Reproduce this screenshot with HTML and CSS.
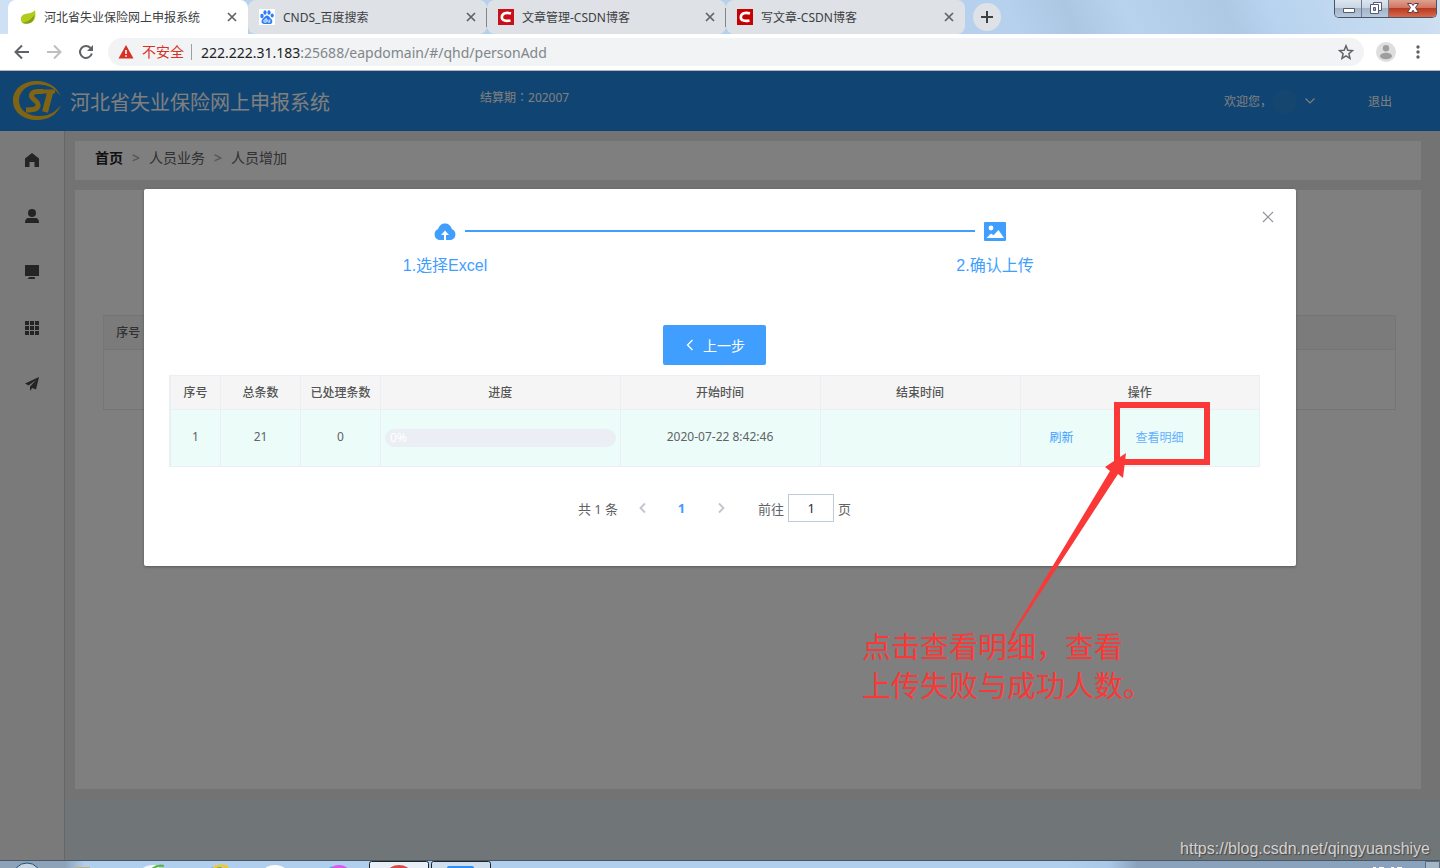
FILE: index.html
```html
<!DOCTYPE html>
<html lang="zh-CN">
<head>
<meta charset="utf-8">
<meta name="viewport" content="width=device-width, initial-scale=1">
<title>河北省失业保险网上申报系统</title>
<link rel="stylesheet" href="styles.css">
</head>
<body>
<div class="browser">
  <div class="tabstrip">
    <div class="tab tab-active">
      <svg class="favicon" viewBox="0 0 16 16"><path d="M15 1c1 6 .5 11-5 13-3 1-6 .5-8-.2C-.5 10 1 6 5 5c4-.8 7-.5 10-4z" fill="#b5cb1c"/><path d="M2 13.800c5-.3 9-3 12.500-8C14 11 12 14 8 14.600c-2.500.3-4.500 0-6-.8z" fill="#7fa016"/></svg>
      <span class="tab-title">河北省失业保险网上申报系统</span>
      <button class="tab-close" aria-label="关闭标签页"><svg viewBox="0 0 16 16"><path d="M4 4l8 8M12 4l-8 8"/></svg></button>
    </div>
    <div class="tab">
      <svg class="favicon" viewBox="0 0 16 16"><path fill="#fff" d="M0 0h16v16H0z"/><g fill="#2c7df7"><ellipse cx="3" cy="7" rx="1.700" ry="2.200"/><ellipse cx="6" cy="3.500" rx="1.600" ry="2.200"/><ellipse cx="10" cy="3.500" rx="1.600" ry="2.200"/><ellipse cx="13.200" cy="6.500" rx="1.600" ry="2"/><path d="M8 6.500c1.800 0 2.400 1.700 3.800 2.900 2.400 2 2 5.600-1 5.600H5.200c-3 0-3.600-3.400-1.200-5.400C5.400 8.500 6 6.500 8 6.500z"/></g><path d="M7.200 9v4.200H5.800c-1.400 0-1.400-2.400 0-2.400h1.400M8.800 10.500v2c0 .7.500.7 2 .7v-2.700" stroke="#fff" fill="none" stroke-width=".9"/></svg>
      <span class="tab-title">CNDS_百度搜索</span>
      <button class="tab-close" aria-label="关闭标签页"><svg viewBox="0 0 16 16"><path d="M4 4l8 8M12 4l-8 8"/></svg></button>
    </div>
    <div class="tab tab-divided">
      <svg class="favicon" viewBox="0 0 16 16"><path fill="#c9101a" d="M0 0h16v16H0z"/><path d="M13 4.500C8.500 3.200 4 4 3.800 8.200c-.1 3.700 4.500 4.200 8.700 3.200" fill="none" stroke="#fff" stroke-width="2.600"/></svg>
      <span class="tab-title">文章管理-CSDN博客</span>
      <button class="tab-close" aria-label="关闭标签页"><svg viewBox="0 0 16 16"><path d="M4 4l8 8M12 4l-8 8"/></svg></button>
    </div>
    <div class="tab tab-divided">
      <svg class="favicon" viewBox="0 0 16 16"><path fill="#c80000" d="M0 0h16v16H0z"/><path d="M13 4.500C8.500 3.200 4 4 3.800 8.200c-.1 3.700 4.500 4.200 8.700 3.200" fill="none" stroke="#fff" stroke-width="2.600"/></svg>
      <span class="tab-title">写文章-CSDN博客</span>
      <button class="tab-close" aria-label="关闭标签页"><svg viewBox="0 0 16 16"><path d="M4 4l8 8M12 4l-8 8"/></svg></button>
    </div>
    <button class="new-tab" aria-label="新标签页"><svg viewBox="0 0 28 28"><path d="M14 8v12M8 14h12" stroke="#3c4043" stroke-width="2"/></svg></button>
    <div class="window-controls">
      <button class="win-btn" aria-label="最小化"><svg viewBox="0 0 28 18"><path d="M8.500 8.500h11v4h-11z" fill="#fff" stroke="#555b73"/></svg></button>
      <button class="win-btn" aria-label="还原"><svg viewBox="0 0 28 18"><path d="M11.500 2.500h8v8h-8z" fill="#fff" stroke="#555b73"/><path d="M8.500 4.500h8v9h-8z" fill="#fff" stroke="#555b73"/><path d="M11.500 7.500h2v3h-2z" fill="#9fb0cc" stroke="#555b73"/></svg></button>
      <button class="win-btn win-close" aria-label="关闭"><svg viewBox="0 0 46 18"><path d="M18.500 3.500h4l1.500 2 1.500-2h4l-3 4 3 5h-4l-1.500-2.300-1.500 2.300h-4l3-5z" fill="#fff" stroke="#5b3b48"/></svg></button>
    </div>
  </div>

  <div class="toolbar">
    <button class="nav-btn" aria-label="后退"><svg viewBox="0 0 16 16"><path d="M15 8H2M8 1.500L1.500 8 8 14.500" fill="none" stroke="#5f6368" stroke-width="2"/></svg></button>
    <button class="nav-btn" aria-label="前进"><svg viewBox="0 0 16 16"><path d="M1 8h13M8 1.500L14.500 8 8 14.500" fill="none" stroke="#bdbfc1" stroke-width="2"/></svg></button>
    <button class="nav-btn" aria-label="重新加载"><svg viewBox="0 0 16 16"><path d="M13.800 9.500A6 6 0 1 1 12.500 4" fill="none" stroke="#5f6368" stroke-width="2"/><path d="M15 1v6H9z" fill="#5f6368"/></svg></button>
    <div class="address">
      <svg class="warn" viewBox="0 0 16 16"><path d="M8 1l7.500 13.500H.5z" fill="#d93025"/><path d="M7.200 6h1.600v4H7.200zM7.200 11.200h1.600v1.600H7.200z" fill="#fff"/></svg>
      <span class="insecure">不安全</span>
      <span class="url"><span class="host">222.222.31.183</span>:25688/eapdomain/#/qhd/personAdd</span>
      <button class="star" aria-label="收藏"><svg viewBox="0 0 16 16"><path d="M8 1.800l1.800 4.400 4.700.4-3.600 3.100 1.100 4.600L8 11.800l-4 2.500 1.100-4.600-3.600-3.100 4.700-.4z" fill="none" stroke="#5f6368" stroke-width="1.500"/></svg></button>
    </div>
    <button class="profile" aria-label="用户"><svg viewBox="0 0 20 20"><circle cx="10" cy="10" r="10" fill="#dedede"/><circle cx="10" cy="6.300" r="3.200" fill="#9e9e9e"/><ellipse cx="10" cy="14" rx="6" ry="3.200" fill="#9e9e9e"/></svg></button>
    <button class="more" aria-label="菜单"><svg viewBox="0 0 16 16"><g fill="#5f6368"><circle cx="8" cy="3" r="1.700"/><circle cx="8" cy="8" r="1.700"/><circle cx="8" cy="13" r="1.700"/></g></svg></button>
  </div>

  <div class="viewport">
    <div class="app">
      <header class="app-header">
        <div class="brand">
          <svg class="logo" viewBox="0 0 50 40"><path fill="#ffc828" fill-rule="evenodd" d="M49 16C45 5 35 0 25 0 11 0 1 8 1 19.500S11 39 25 39c11 0 20-5 24-15-5 6-10 11-22 11C14 35 7 28 7 19.500S14 3.500 26 3.500c10 0 18 4 23 12.500z"/><g fill="none" stroke="#ffc828"><path d="M31 10.500h-5c-6 0-8 3.500-5.500 6.500 2.500 3 6.500 4 5.500 8-1 3.500-5 4-12 4" stroke-width="5"/><path d="M30 10.500h13" stroke-width="4"/><path d="M38.500 10L33 31" stroke-width="6"/></g></svg>
          <h1 class="brand-name">河北省失业保险网上申报系统</h1>
        </div>
        <div class="period">结算期<span class="mid" lang="zh-TW">：</span>202007</div>
        <div class="account">
          <button class="welcome">欢迎您，<span class="avatar"></span><svg class="chevron" viewBox="0 0 12 12"><path d="M1.500 3.500L6 8l4.500-4.500" fill="none" stroke="#fff" stroke-width="1.200"/></svg></button>
          <a class="logout" href="#">退出</a>
        </div>
      </header>
      <nav class="sidebar">
        <a href="#" aria-label="首页"><svg viewBox="0 0 14 14"><path d="M7 0l7 5.500V14H9.500V9h-5v5H0V5.500z"/></svg></a>
        <a href="#" aria-label="人员业务"><svg viewBox="0 0 14 14"><circle cx="7" cy="4" r="4"/><path d="M0 14c0-3 1-5 4-5h6c3 0 4 2 4 5z"/></svg></a>
        <a href="#" aria-label="单位业务"><svg viewBox="0 0 14 14"><path d="M0 0h14v11H0zM4.500 12h5l.8 2H2.500z"/></svg></a>
        <a href="#" aria-label="应用"><svg viewBox="0 0 14 14"><path d="M0 0h4v4H0zM5 0h4v4H5zM10 0h4v4h-4zM0 5h4v4H0zM5 5h4v4H5zM10 5h4v4h-4zM0 10h4v4H0zM5 10h4v4H5zM10 10h4v4h-4z"/></svg></a>
        <a href="#" aria-label="申报"><svg viewBox="0 0 14 14"><path d="M14 0L0 6.500l3.500 2L11 3 5 9.500V14l2.200-3 3.800 1.500z"/></svg></a>
      </nav>
      <main class="main">
        <div class="pane">
          <nav class="crumbs"><a class="crumb-home" href="#">首页</a><span class="crumb-sep">&gt;</span><a href="#">人员业务</a><span class="crumb-sep">&gt;</span><a href="#">人员增加</a></nav>
          <section class="panel">
            <table class="list">
              <thead><tr><th class="list-index">序号</th><th></th></tr></thead>
              <tbody><tr><td colspan="2"></td></tr></tbody>
            </table>
          </section>
        </div>
      </main>
    </div>

    <div class="mask">
      <section class="dialog" role="dialog" aria-label="上传">
        <button class="dialog-close" aria-label="关闭对话框"><svg viewBox="0 0 12 12"><path d="M1 1l10 10M11 1L1 11" stroke="#909399" stroke-width="1.200"/></svg></button>
        <div class="steps">
          <div class="step">
            <div class="step-head"><i class="line line-off"></i><svg class="step-icon" viewBox="0 0 24 24"><path d="M6 21a5.800 5.800 0 0 1-.8-11C6 6.500 9 4.500 12 4.500s6 2 6.800 5.500a5.800 5.800 0 0 1-.8 11h-5v-5h3l-4-4.500L8 16h3v5z" fill="#409eff"/></svg><i class="line"></i></div>
            <div class="step-title">1.选择Excel</div>
          </div>
          <div class="step">
            <div class="step-head"><i class="line"></i><svg class="step-icon" viewBox="0 0 24 24"><rect x="1" y="3" width="22" height="19" rx="1" fill="#409eff"/><circle cx="8" cy="9" r="2.400" fill="#fff"/><path d="M3.500 19l4.500-4.500 2.500 1.800L15.500 11l5.500 8z" fill="#fff"/></svg><i class="line line-off"></i></div>
            <div class="step-title">2.确认上传</div>
          </div>
        </div>
        <div class="dialog-body">
          <button class="prev-step"><svg viewBox="0 0 12 12"><path d="M8.500 1L3.500 6l5 5" fill="none" stroke="#fff" stroke-width="1.300"/></svg>上一步</button>
          <table class="records">
            <colgroup><col class="c-index"><col class="c-count"><col class="c-count"><col class="c-wide"><col class="c-time"><col class="c-time"><col class="c-wide"></colgroup>
            <thead><tr><th>序号</th><th>总条数</th><th>已处理条数</th><th>进度</th><th>开始时间</th><th>结束时间</th><th>操作</th></tr></thead>
            <tbody><tr>
              <td>1</td><td>21</td><td>0</td>
              <td class="progress-cell"><div class="progress" role="progressbar" aria-label="进度" aria-valuenow="0" aria-valuemin="0" aria-valuemax="100">0%</div></td>
              <td>2020-07-22 8:42:46</td><td></td>
              <td><div class="actions"><a href="#">刷新</a><a class="detail" href="#">查看明细</a></div></td>
            </tr></tbody>
          </table>
          <div class="pagination">
            <span class="total">共 1 条</span>
            <button class="page-btn" aria-label="上一页"><svg viewBox="0 0 12 12"><path d="M8 1.500L3.500 6 8 10.500" fill="none" stroke="#c0c4cc" stroke-width="1.800"/></svg></button>
            <button class="page-btn page-current">1</button>
            <button class="page-btn" aria-label="下一页"><svg viewBox="0 0 12 12"><path d="M4 1.500L8.500 6 4 10.500" fill="none" stroke="#c0c4cc" stroke-width="1.800"/></svg></button>
            <label class="jump">前往<input type="text" value="1" inputmode="numeric">页</label>
          </div>
        </div>
      </section>
    </div>
  </div>

  <footer class="taskbar">
    <svg class="task-left" viewBox="0 0 500 8"><circle cx="27" cy="16" r="14" fill="#c4d4e2" stroke="#1b4f7c"/><path d="M75 6h15v1H75z" fill="#c8b070"/><path d="M142 8c3-4 12-5 18-3l-2 3z" fill="#f4f8fa"/><path d="M152 8c4-3 8-4 12-3" stroke="#5cb83a" stroke-width="2" fill="none"/><path d="M207 8l7-2h8l-2 2z" fill="#5a9ac0"/><path d="M213 8c4-4 10-4 14-2v2" stroke="#f3cb18" stroke-width="2.500" fill="none"/><ellipse cx="275" cy="10" rx="11" ry="6" fill="#fff"/><path d="M327 8l5-3v3z" fill="#35c4ef"/><ellipse cx="339" cy="11" rx="10" ry="7" fill="#df55f2"/><rect x="369.500" y=".5" width="59" height="12" rx="2" fill="#e8eff6" stroke="#222"/><ellipse cx="399" cy="11" rx="11" ry="7" fill="#d94a40"/><rect x="431.500" y=".5" width="59" height="12" rx="2" fill="#cfdeed" stroke="#222"/><rect x="447" y="5" width="27" height="8" rx="2" fill="#2a90f5"/></svg>
    <svg class="task-right" viewBox="0 0 80 8"><path d="M13 6.500h3M19 6.500h5M31 6.500h3M37 6.500h5" stroke="#fff"/><path d="M65.500 .5h14v10h-14z" fill="#a5b6c6" stroke="#5b6b7b"/></svg>
  </footer>

  <div class="note" aria-hidden="true">
    <div class="note-box"></div>
    <svg class="note-arrow" viewBox="0 0 118 184"><path d="M116 0l-3 25-5-4L3 182l-3 2L100 18l-5-4z" fill="#fb3838"/></svg>
  </div>
  <p class="note-text">点击查看明细，查看<br>上传失败与成功人数。</p>
  <div class="watermark">https://blog.csdn.net/qingyuanshiye</div>
</div>
</body>
</html>
```

FILE: styles.css
```css
* { box-sizing: border-box; }
body {
  margin: 0;
  font-family: "Noto Sans", "Noto Sans CJK SC", sans-serif;
  font-size: 12px;
  color: #606266;
}
button {
  padding: 0;
  border: 0;
  background: none;
  font: inherit;
  color: inherit;
}
a { color: inherit; text-decoration: none; }
svg { display: block; flex: none; }
.browser {
  position: relative;
  display: flex;
  flex-direction: column;
  min-height: 100vh;
  overflow: hidden;
}

/* tab strip */
.tabstrip {
  display: flex;
  height: 34px;
  padding-left: 8px;
  background: linear-gradient(65deg, #cfe1f4 0, #b3d0ec 20%, #b5d1ed 70%, #abc7e2 74%, #b7d3ee 78%, #adc9e4 85%, #b7d3ef 88%, #cfe0f1 100%);
}
.tab {
  position: relative;
  display: flex;
  align-items: center;
  flex: 0 1 239px;
  min-width: 0;
  gap: 8px;
  padding: 0 8px 0 11px;
  border-radius: 8px;
  background: #dee1e6;
  color: #3c4043;
}
.tab-active {
  flex-basis: 240px;
  padding-left: 12px;
  border-radius: 8px 8px 0 0;
  background: #fff;
}
.tab-divided::before {
  content: "";
  position: absolute;
  left: -1px;
  top: 8px;
  width: 1px;
  height: 19px;
  background: #80868b;
}
.favicon { width: 16px; height: 16px; }
.tab-title { flex: 1; overflow: hidden; white-space: nowrap; }
.tab-close, .tab-close svg { width: 16px; height: 16px; }
.tab-close path { stroke: #5f6368; stroke-width: 1.700; }
.new-tab {
  width: 28px;
  height: 28px;
  margin: 3px 0 0 8px;
  border-radius: 50%;
  background: #dee1e6;
}
.window-controls {
  display: flex;
  height: 18px;
  margin: 0 3px 0 auto;
  border: 1px solid #475468;
  border-top: 0;
  border-radius: 0 0 5px 5px;
  overflow: hidden;
}
.win-btn {
  width: 27px;
  border-right: 1px solid #6c7a90;
  background: linear-gradient(#dde6ef 0, #c9d5e2 45%, #a3b3c9 50%, #b9c9db 100%);
}
.win-btn svg { height: 18px; }
.win-close { width: 47px; border: 0; background: linear-gradient(#dfa18f 0, #cf7663 45%, #b93a22 50%, #d8694b 100%); }

/* toolbar */
.toolbar {
  display: flex;
  align-items: center;
  height: 37px;
  padding: 0 14px;
  border-bottom: 1px solid #b6b4b6;
  background: #fff;
}
.nav-btn { width: 16px; margin-right: 16px; }
.nav-btn svg, .star svg, .more svg { width: 16px; height: 16px; }
.address {
  display: flex;
  align-items: center;
  flex: 1;
  height: 28px;
  margin: 0 12px 0 -2px;
  padding: 0 10px;
  border-radius: 14px;
  background: #f1f3f4;
  font-size: 14px;
}
.warn { width: 16px; height: 16px; margin-right: 8px; }
.insecure {
  padding-right: 7px;
  border-right: 1px solid #9aa0a6;
  line-height: 16px;
  color: #d93025;
}
.url { flex: 1; padding-left: 9px; color: #80868b; white-space: nowrap; }
.host { color: #202124; }
.profile svg { width: 20px; height: 20px; }
.more { margin-left: 14px; }

/* application */
.viewport { position: relative; display: flex; flex: 1; }
.app {
  display: grid;
  grid-template: 60px 1fr / 65px 1fr;
  flex: 1;
  background: #e1eaf0;
}
.app-header {
  grid-column: 1 / -1;
  display: grid;
  grid-template-columns: 1fr 1fr 1fr;
  background: #2088e4;
  color: #fff;
}
.brand { display: flex; align-items: center; gap: 8px; padding-left: 12px; }
.logo { width: 50px; height: 40px; }
.brand-name { margin: 0; font-size: 20px; font-weight: 400; white-space: nowrap; }
.period { padding-top: 16px; line-height: 20px; }
.mid { font-family: "Noto Sans CJK TC", sans-serif; }
.account {
  display: flex;
  align-items: center;
  justify-content: flex-end;
  gap: 52px;
  padding-right: 48px;
}
.welcome { display: flex; align-items: center; }
.avatar { width: 25px; height: 25px; border-radius: 50%; background: #2b8cdf; }
.chevron { width: 12px; height: 12px; margin-left: 7px; }
.sidebar { padding-top: 1px; border-right: 1px solid #ccc; background: #f4f4f4; }
.sidebar a { display: grid; place-items: center; height: 56px; }
.sidebar svg { width: 14px; height: 14px; fill: #484848; }
.main { display: flex; padding-bottom: 61px; }
.pane {
  display: flex;
  flex: 1;
  flex-direction: column;
  gap: 10px;
  padding: 10px 19px 10px 10px;
  background: #e6e6e6;
}
.crumbs {
  display: flex;
  height: 39px;
  padding-left: 20px;
  background: #fff;
  font-size: 14px;
  line-height: 34px;
}
.crumb-home { color: #222; font-weight: 700; }
.crumb-sep { margin: 0 9px; color: #b0b3ba; font-weight: 700; }
.panel { flex: 1; padding: 125px 25px 0 28px; background: #fff; }
.list { width: 100%; border-collapse: collapse; border: 1px solid #e9ebf2; }
.list th { height: 34px; padding: 0 0 1px; background: #f6f6f6; font-weight: 500; }
.list-index { width: 49px; }
.list td { height: 60px; border-top: 1px solid #e9ebf2; }

/* dialog */
.mask {
  position: absolute;
  inset: 0;
  display: flex;
  align-items: flex-start;
  justify-content: center;
  padding-top: 118px;
  background: rgba(0, 0, 0, .5);
}
.dialog {
  position: relative;
  width: 80%;
  padding: 30px 26px 44px;
  border-radius: 2px;
  background: #fff;
  box-shadow: 0 1px 3px rgba(0, 0, 0, .3);
}
.dialog-close { position: absolute; top: 22px; right: 22px; }
.dialog-close svg { width: 12px; height: 12px; }
.steps { display: grid; grid-template-columns: 1fr 1fr; color: #409eff; }
.step-head { display: flex; align-items: center; gap: 8px; }
.step-icon { width: 24px; height: 24px; }
.line { flex: 1; height: 2px; background: #409eff; }
.line-off { background: transparent; }
.step-title {
  margin-top: 10px;
  font-family: "Liberation Sans", "Noto Sans CJK SC", sans-serif;
  font-size: 16px;
  line-height: 25px;
  text-align: center;
}
.dialog-body {
  display: flex;
  flex-direction: column;
  align-items: center;
  margin: 47px 10px 0 -1px;
}
.prev-step {
  display: flex;
  align-items: center;
  gap: 7px;
  height: 40px;
  padding: 0 21px;
  border-radius: 2px;
  background: #409eff;
  color: #fff;
  font-size: 14px;
}
.prev-step svg { width: 12px; height: 12px; }
.records {
  width: 100%;
  margin-top: 10px;
  table-layout: fixed;
  border-collapse: separate;
  border-spacing: 0;
  border: solid #ebeef5;
  border-width: 1px 0 0 2px;
  text-align: center;
}
.c-index { width: 50px; }
.c-count { width: 80px; }
.c-time { width: 200px; }
.records th, .records td { padding: 0 4px; border: solid #ebeef5; border-width: 0 1px 1px 0; white-space: nowrap; }
.records th { height: 34px; padding-bottom: 1px; background: #f5f5f5; color: #555; font-weight: 500; }
.records td { height: 57px; padding-bottom: 3px; background: #ebfcf9; }
.progress {
  height: 18px;
  margin-top: 3px;
  padding-left: 5px;
  border-radius: 9px;
  background: #ebeef5;
  color: #fff;
  line-height: 17px;
  text-align: left;
}
.actions { display: flex; gap: 62px; padding: 1px 0 0 25px; color: #409eff; }
.detail { color: #66b1ff; }
.pagination {
  display: flex;
  align-items: center;
  height: 28px;
  margin-top: 27px;
  font-size: 13px;
}
.total { margin-right: 5px; }
.page-btn { display: grid; place-items: center; width: 39px; height: 28px; }
.page-btn svg { width: 12px; height: 12px; }
.page-current { color: #409eff; font-weight: 700; }
.jump { display: flex; align-items: center; gap: 4px; margin-left: 18px; }
.jump input {
  width: 46px;
  height: 28px;
  border: 1px solid #bfcbd9;
  background: #fff;
  color: #1f2d3d;
  font: inherit;
  text-align: center;
}

/* taskbar */
.taskbar {
  display: flex;
  justify-content: space-between;
  height: 8px;
  border-top: 1px solid #45586a;
  background: linear-gradient(90deg, #8ea3b8 0, #8ea3b8 65px, #b0cfee 85px, #b0cfee 74%, #a9c8e8 77%, #8aa2bb 79%, #8aa2bb 100%);
  overflow: hidden;
}
.taskbar svg { height: 8px; }

/* annotations */
.note-box {
  position: absolute;
  left: 1114px;
  top: 402px;
  width: 96px;
  height: 63px;
  border: 6px solid #fb3838;
}
.note-arrow { position: absolute; left: 1010px; top: 453px; width: 118px; height: 184px; }
.note-text {
  position: absolute;
  left: 862px;
  top: 627px;
  margin: 0;
  color: #fb3838;
  font-size: 29px;
  font-weight: 400;
  line-height: 39px;
  white-space: nowrap;
}
.watermark {
  position: absolute;
  right: 10px;
  bottom: 10px;
  color: #d2d2d2;
  font: 16px/18px "Liberation Sans", sans-serif;
  text-shadow: 1px 1px 1px #444;
}
```
